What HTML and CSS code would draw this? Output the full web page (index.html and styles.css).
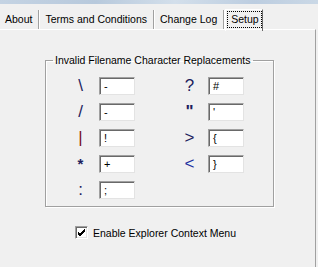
FILE: index.html
```html
<!DOCTYPE html>
<html>
<head lang="en">
    <meta charset="UTF-8">
    <title>Setup</title>
    <link rel="stylesheet" href="styles.css">
</head>
<body>
<div class="titlebar"></div>
<div class="tabs">
    <span class="tab">About</span>
    <span class="tab">Terms and Conditions</span>
    <span class="tab">Change Log</span>
    <span class="tab active"><span class="focus">Setup</span></span>
</div>
<div class="panel">
    <fieldset class="group">
        <legend>Invalid Filename Character Replacements</legend>
        <div class="grid">
            <div class="pair"><span class="sym">\</span><span class="field">-</span></div>
            <div class="pair"><span class="sym">?</span><span class="field">#</span></div>
            <div class="pair"><span class="sym">/</span><span class="field">-</span></div>
            <div class="pair"><span class="sym quote">"</span><span class="field">'</span></div>
            <div class="pair"><span class="sym pipe">|</span><span class="field">!</span></div>
            <div class="pair"><span class="sym">&gt;</span><span class="field">{</span></div>
            <div class="pair"><span class="sym star">*</span><span class="field">+</span></div>
            <div class="pair"><span class="sym lt">&lt;</span><span class="field">}</span></div>
            <div class="pair"><span class="sym">:</span><span class="field">;</span></div>
        </div>
    </fieldset>
    <label class="check">
        <span class="box">
            <svg width="9" height="9" viewBox="0 0 9 9"><path d="M1 4 L3 6 L8 1 M1 5 L3 7 L8 2 M1 6 L3 8 L8 3" stroke="#000" stroke-width="1" fill="none"/></svg>
        </span>
        Enable Explorer Context Menu
    </label>
</div>
</body>
</html>
```

FILE: styles.css
```css
* {
    margin: 0;
    padding: 0;
}

body {
    background-color: #f0f0f0;
    font: 10.5px "Liberation Sans", Arial, sans-serif;
    color: #000;
    width: 318px;
    height: 267px;
    overflow: hidden;
}

.titlebar {
    height: 4px;
    background: linear-gradient(to right, #c4d3e3, #b7c9dc 30%, #d3dfeb 55%, #bccde0 80%, #cad8e6);
}

.tabs {
    display: flex;
    height: 25px;
}

.tab {
    margin-top: 6px;
    height: 19px;
    line-height: 18px;
    padding: 0 6px 0 5px;
    border-right: 1px solid #a0a0a0;
    box-shadow: 1px 0 0 #fff;
    margin-right: 1px;
    white-space: nowrap;
}

.tab.active {
    margin-top: 5px;
    margin-left: 0;
    height: 20px;
    padding: 1px 0 0 1px;
    border-top: 1px solid #fff;
    border-left: 1px solid #fff;
    border-right: 1px solid #696969;
    box-shadow: none;
}

.focus {
    display: block;
    height: 15px;
    line-height: 15px;
    padding: 0 2px 0 3px;
    border: 1px dotted #000;
}

.panel {
    height: 238px;
    margin-right: 2px;
    border-top: 1px solid #fff;
    border-right: 1px solid #a0a0a0;
}

.group {
    margin: 24px 0 0 45px;
    width: 229px;
    box-sizing: border-box;
    border: 1px solid #a0a0a0;
    box-shadow: inset 1px 1px 0 #fff, 1px 1px 0 #fff;
    padding: 10px 0 7px 0;
}

.group legend {
    margin-left: 7px;
    padding: 0 2px;
    line-height: 13px;
    white-space: nowrap;
}

.grid {
    display: grid;
    grid-template-columns: 65px 65px;
    column-gap: 44px;
    row-gap: 8px;
    margin-left: 24px;
}

.pair {
    display: flex;
    gap: 8px;
    height: 18px;
}

.sym {
    width: 21px;
    font: 17px/18px "Liberation Sans", Arial, sans-serif;
    color: #1e1e5e;
    text-align: center;
}

.sym.pipe {
    color: #7a1020;
}

.sym.star {
    font-weight: bold;
    font-size: 15px;
}

.sym.quote {
    font-weight: bold;
}

.sym.lt {
    color: #2030a0;
}

.field {
    width: 36px;
    box-sizing: border-box;
    background-color: #fff;
    border-top: 1px solid #a0a0a0;
    border-left: 1px solid #a0a0a0;
    border-right: 1px solid #e3e3e3;
    border-bottom: 1px solid #e3e3e3;
    box-shadow: inset 1px 1px 0 #696969;
    padding-left: 4px;
    font-size: 11px;
    line-height: 16px;
}

.check {
    display: flex;
    align-items: center;
    margin: 19px 0 0 75px;
    gap: 5px;
}

.box {
    width: 13px;
    height: 13px;
    box-sizing: border-box;
    background-color: #fff;
    border-top: 1px solid #a0a0a0;
    border-left: 1px solid #a0a0a0;
    border-right: 1px solid #fff;
    border-bottom: 1px solid #fff;
    box-shadow: inset 1px 1px 0 #696969, inset -1px -1px 0 #e3e3e3;
    display: flex;
    align-items: center;
    justify-content: center;
}
```
